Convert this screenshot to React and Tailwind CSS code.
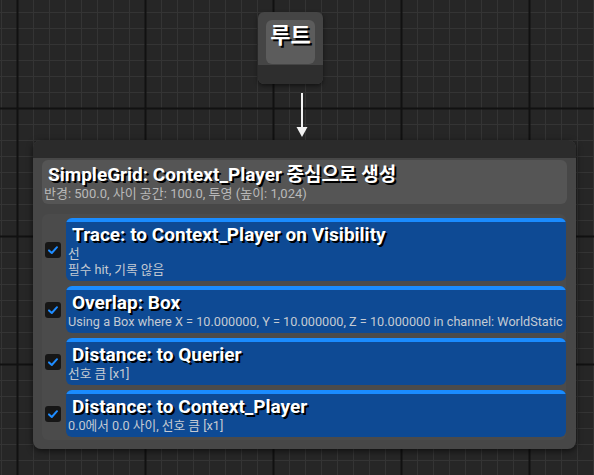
import React from 'react';

const FONT = "font-['Roboto','Noto_Sans_CJK_KR',sans-serif]";

// background grid of the graph editor: fine lines every 16px, heavy every 128px
function GraphGrid() {
  const fineX = [];
  for (let x = 1; x < 594; x += 16) fineX.push(x);
  const fineY = [];
  for (let y = 12; y < 475; y += 16) fineY.push(y);
  const heavyX = [17, 145, 273, 401, 529];
  const heavyY = [108, 236, 364];
  return (
    <svg className="absolute inset-0" width="594" height="475">
      <rect width="594" height="475" fill="#262626" />
      {fineX.map((x) => (
        <rect key={'fx' + x} x={x} y="0" width="1" height="475" fill="#343434" />
      ))}
      {fineY.map((y) => (
        <rect key={'fy' + y} x="0" y={y} width="594" height="1" fill="#343434" />
      ))}
      {heavyX.map((x) => (
        <rect key={'hx' + x} x={x - 0.5} y="0" width="2" height="475" fill="#111111" />
      ))}
      {heavyY.map((y) => (
        <rect key={'hy' + y} x="0" y={y - 0.5} width="594" height="2" fill="#111111" />
      ))}
    </svg>
  );
}

function Check() {
  return (
    <div className="w-4 h-4 rounded-[3px] bg-[#161616] flex items-center justify-center">
      <svg width="14" height="14" viewBox="0 0 14 14">
        <path d="M3 7.4 L5.8 10 L11 4.2" fill="none" stroke="#1f8cff" strokeWidth="2" strokeLinecap="round" strokeLinejoin="round" />
      </svg>
    </div>
  );
}

function TestRow({ title, lines }) {
  return (
    <div className="flex items-center">
      <div className="w-6 flex justify-start pl-[3px]">
        <Check />
      </div>
      <div className="flex-1 rounded-md overflow-hidden bg-[#0e4a94]">
        <div className="h-1 bg-[#1a8cff]" />
        <div className="pl-[6px] pr-1 pt-[2px] pb-[3px]">
          <div className="text-[19px] leading-[22px] font-bold text-white [text-shadow:2px_2px_0_#000]">{title}</div>
          {lines.map((l) => (
            <div key={l} className="text-[12.7px] leading-[16px] text-[#c4cad3] -ml-[4px] whitespace-nowrap">{l}</div>
          ))}
        </div>
      </div>
    </div>
  );
}

export default function App() {
  const tests = [
    { title: 'Trace: to Context_Player on Visibility', lines: ['선', '필수 hit, 기록 않음'] },
    { title: 'Overlap: Box', lines: ['Using a Box where X = 10.000000, Y = 10.000000, Z = 10.000000 in channel: WorldStatic'] },
    { title: 'Distance: to Querier', lines: ['선호 큼 [x1]'] },
    { title: 'Distance: to Context_Player', lines: ['0.0에서 0.0 사이, 선호 큼 [x1]'] },
  ];

  return (
    <div className={`relative w-[594px] h-[475px] overflow-hidden ${FONT}`}>
      <GraphGrid />

      {/* root node */}
      <div className="absolute left-[258px] top-[12px] w-[65px] h-[72px] rounded-md bg-[#454545] flex flex-col overflow-hidden shadow-[0_2px_4px_rgba(0,0,0,0.5)]">
        <div className="flex-1 px-2 pt-2">
          <div className="h-[44px] rounded-md bg-[#5c5c5c] flex justify-center pt-[3px]">
            <span className="text-[22px] leading-[26px] font-bold text-white [text-shadow:2px_2px_0_#000]">루트</span>
          </div>
        </div>
        <div className="h-[19px] bg-[#2e2e2e]" />
      </div>

      {/* connection */}
      <svg className="absolute left-[292px] top-[92px]" width="20" height="48">
        <line x1="10" y1="1" x2="10" y2="38" stroke="#f2f2f2" strokeWidth="2" />
        <path d="M4.5 35 L15.5 35 L10 45 Z" fill="#f2f2f2" />
      </svg>

      {/* generator node */}
      <div className="absolute left-[33px] top-[140px] w-[543px] h-[309px] rounded-lg bg-[#474747] overflow-hidden shadow-[0_2px_6px_rgba(0,0,0,0.6)]">
        <div className="h-[18px] bg-[#2b2b2b]" />
        <div className="px-[9px] pt-[2px]">
          <div className="h-[44px] rounded-md bg-[#555555] px-[6px] pt-[3px]">
            <div className="text-[19px] leading-[23px] font-bold text-white [text-shadow:2px_2px_0_#000]">
              SimpleGrid: Context_Player 중심으로 생성
            </div>
            <div className="text-[13px] leading-[16px] text-[#b9b9b9] -ml-[4px]">
              반경: 500.0, 사이 공간: 100.0, 투영 (높이: 1,024)
            </div>
          </div>
          <div className="mt-[10px] mr-[1px] rounded-md bg-[#4b4b4b] pt-[4px] pb-[3px] flex flex-col gap-[5px]">
            {tests.map((t) => (
              <TestRow key={t.title} title={t.title} lines={t.lines} />
            ))}
          </div>
        </div>
      </div>
    </div>
  );
}
